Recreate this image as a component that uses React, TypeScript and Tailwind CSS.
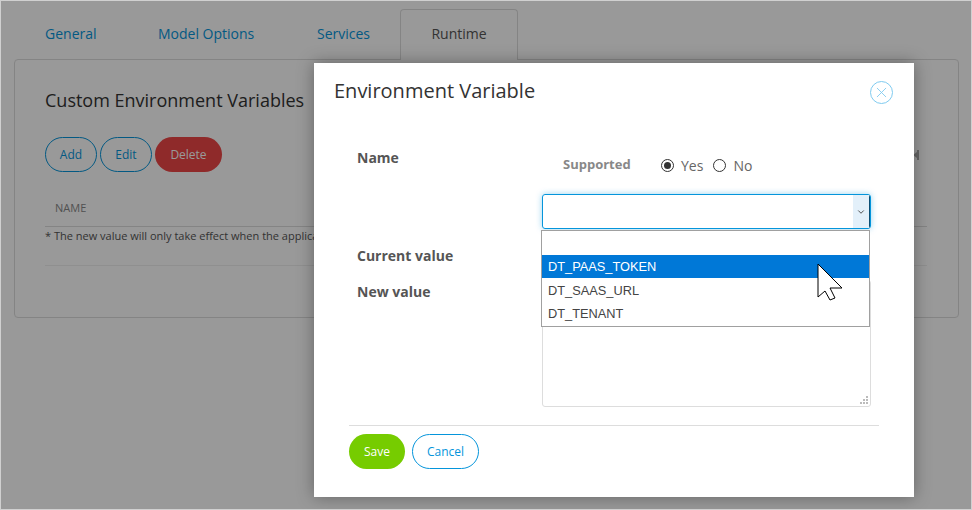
import { X, ChevronDown } from 'lucide-react'

const openSans = "font-['Open_Sans',sans-serif]"

function Background() {
  return (
    <div className="h-[508px] bg-white px-[13px] pt-2">
      {/* Tabs */}
      <div className="flex h-[50px] text-[14px] text-[#0595db]">
        <div className="flex items-center ml-[31px] w-[113px] pb-[2px]">General</div>
        <div className="flex items-center w-[159px] pb-[2px]">Model Options</div>
        <div className="flex items-center w-[83px] pb-[2px]">Services</div>
        <div className="relative flex items-center justify-center w-[118px] h-[51px] pb-[3px] bg-white text-[#555] border border-b-0 border-[#ddd] rounded-t-[4px]">
          Runtime
        </div>
      </div>

      {/* Panel */}
      <div className="h-[259px] w-[945px] bg-white border border-[#ddd] rounded-[4px] pl-[30px] pr-[31px] pt-[28px]">
        <h2 className="text-[18px] leading-[25px] text-[#333]">Custom Environment Variables</h2>
        <div className="flex items-center justify-between mt-[24px]">
          <div className="flex gap-[3px] text-[12px]">
            <button className="w-[52px] h-[35px] rounded-full border border-[#0595db] text-[#0595db]">Add</button>
            <button className="w-[52px] h-[35px] rounded-full border border-[#0595db] text-[#0595db]">Edit</button>
            <button className="w-[67px] h-[35px] rounded-full bg-[#ee4646] text-white">Delete</button>
          </div>
          <svg width="6" height="10" viewBox="0 0 6 10" className="mr-[8px] fill-[#aaa]">
            <path d="M0 5 L4 2 V8 Z" />
            <rect x="4" y="0" width="2" height="10" />
          </svg>
        </div>
        <div className="mt-[19px] h-[36px] pl-[10px] flex items-center border-b border-[#ddd] text-[11px] text-[#888]">
          NAME
        </div>
        <p className="mt-[1px] text-[11px] leading-[16px] text-[#555]">
          * The new value will only take effect when the application is restarted.
        </p>
        <div className="mt-[21px] border-b border-[#eee]" />
      </div>
    </div>
  )
}

function EnvironmentModal() {
  return (
    <div className="absolute left-[313px] top-[62px] w-[600px] h-[434px] bg-white shadow-[0_0_16px_rgba(0,0,0,0.35)] text-[#555]">
      {/* Header */}
      <div className="flex items-start justify-between pl-5 pr-[21px] pt-[14px]">
        <h3 className="text-[20px] leading-[28px] text-[#333]">Environment Variable</h3>
        <button className="mt-[4px] w-[23px] h-[23px] rounded-full border border-[#7fcbf0] flex items-center justify-center text-[#7fcbf0]">
          <X size={17} strokeWidth={1.25} />
        </button>
      </div>

      {/* Form */}
      <div className="mt-[41px] pl-[43px] flex">
        <div className="w-[185px] text-[14px] font-bold">
          <div className="leading-[20px] mt-[2px]">Name</div>
          <div className="leading-[20px] mt-[78px]">Current value</div>
          <div className="leading-[20px] mt-[16px]">New value</div>
        </div>
        <div className="w-[329px]">
          <div className="flex items-center h-[20px] mt-[9px] text-[14px]">
            <span className="ml-[21px] w-[98px] text-[13px] font-bold text-[#888]">Supported</span>
            <span className="w-[13px] h-[13px] rounded-full border border-[#333] flex items-center justify-center">
              <span className="w-[7px] h-[7px] rounded-full bg-[#333]" />
            </span>
            <span className="ml-[7px] text-[#666]">Yes</span>
            <span className="ml-[10px] w-[13px] h-[13px] rounded-full border border-[#333]" />
            <span className="ml-[7px] text-[#666]">No</span>
          </div>
          <div className="mt-[19px] h-[35px] w-[329px] flex border border-[#0595db] rounded-[3px] overflow-hidden shadow-[0_0_6px_rgba(5,149,219,0.4)]">
            <div className="flex-1" />
            <div className="w-[17px] bg-[#e3f0fa] flex items-center justify-center text-[#333] border-r border-[#0a4f75]">
              <ChevronDown size={10} strokeWidth={2} />
            </div>
          </div>
          <div className="relative mt-[51px] h-[127px] w-[329px] border border-[#ddd] rounded-[3px]">
            <svg width="10" height="10" viewBox="0 0 10 10" className="absolute right-[1px] bottom-[1px] fill-[#bbb]">
              <rect x="7" y="1" width="2" height="2" />
              <rect x="4" y="4" width="2" height="2" />
              <rect x="7" y="4" width="2" height="2" />
              <rect x="1" y="7" width="2" height="2" />
              <rect x="4" y="7" width="2" height="2" />
              <rect x="7" y="7" width="2" height="2" />
            </svg>
          </div>
        </div>
      </div>

      {/* Footer */}
      <div className="mx-[35px] mt-[18px] border-t border-[#ddd] pt-2 flex gap-[7px] text-[12px]">
        <button className="w-[56px] h-[35px] rounded-full bg-[#76cc00] text-white">Save</button>
        <button className="w-[67px] h-[35px] rounded-full border border-[#0595db] text-[#0595db]">Cancel</button>
      </div>

      {/* Native select list, open over the form */}
      <div className="absolute left-[227px] top-[167px] w-[329px] h-[97px] bg-white border border-[#a0a0a0] font-['Liberation_Sans',sans-serif] text-[12.8px] text-[#444]">
        <div className="h-[24px]" />
        <div className="h-[23px] leading-[23px] bg-[#0078d7] text-white pl-[6px]">DT_PAAS_TOKEN</div>
        <div className="h-[24px] leading-[25px] pl-[6px]">DT_SAAS_URL</div>
        <div className="h-[23px] leading-[23px] pl-[6px]">DT_TENANT</div>
      </div>

      {/* Mouse pointer */}
      <svg width="26" height="38" viewBox="0 0 26 38" className="absolute left-[503px] top-[200px]">
        <path d="M1 1 V34 L8 28 L13 37 L18 35 L13 25 L25 25 Z" fill="#fff" stroke="#000" strokeWidth="1" strokeLinejoin="round" />
      </svg>
    </div>
  )
}

export default function App() {
  return (
    <div className={`relative box-border w-[972px] h-[510px] overflow-hidden border border-[#d0d0d0] ${openSans}`}>
      <Background />
      <div className="absolute inset-0 bg-black/40" />
      <EnvironmentModal />
    </div>
  )
}
